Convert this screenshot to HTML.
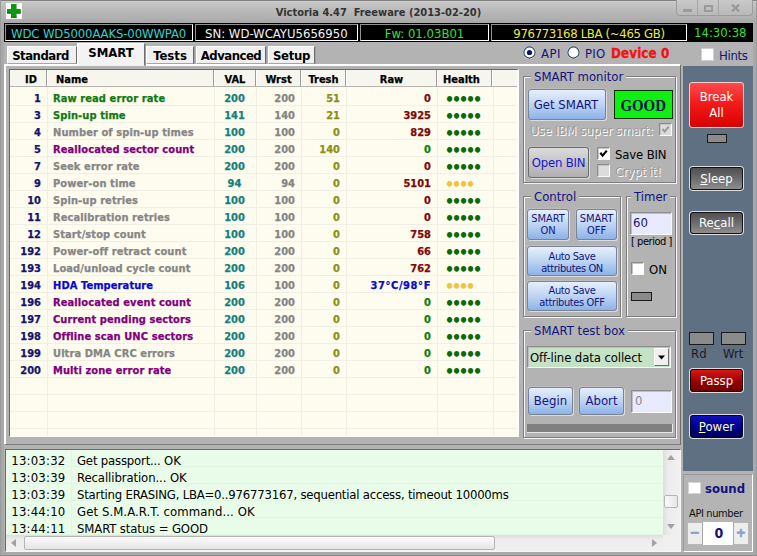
<!DOCTYPE html>
<html><head><meta charset="utf-8"><title>Victoria 4.47</title>
<style>
html,body{margin:0;padding:0}
body{width:757px;height:556px;position:relative;overflow:hidden;background:#b3b3b3;font-family:"DejaVu Sans Condensed","DejaVu Sans","Liberation Sans",sans-serif;font-stretch:condensed;font-size:13px;color:#000;line-height:1}
div,span{box-sizing:border-box}
.a{position:absolute}
.t{position:absolute;white-space:pre;line-height:16px;height:16px}
/* title bar */
#titlebar{left:0;top:0;width:757px;height:23px;background:linear-gradient(#c8c8c8,#a8a8a8)}
#title{left:0;width:757px;text-align:center;top:5px;font-weight:bold;font-size:11px;color:#333}
#wc{left:676px;top:0;width:77px;height:16px;border:1px solid #9b9b9b;border-top:none;border-radius:0 0 4px 4px;background:linear-gradient(#c9c9c9,#b9b9b9)}
/* black strip */
.bb{position:absolute;top:24px;height:17px;background:#000;border:1px solid;border-color:#929292 #fff #fff #929292}
.bb span{position:absolute;top:1px;left:0;right:0;line-height:16px;white-space:pre}
/* tabs */
.tab{position:absolute;top:46px;height:18px;background:#f0f0f0;border:1px solid;border-color:#fff #6d6d6d #a6a6a6 #fff;box-shadow:1px 0 0 #a0a0a0;font-weight:bold;font-size:13px;text-align:center;line-height:17px}
.tab.sel{top:43px;height:23px;background:#f3f3f3;border-bottom-color:#f3f3f3;line-height:18px;z-index:3}
/* table */
#tbl{left:10px;top:70px;width:507px;height:366px;background:#fdfcee;overflow:hidden;font-weight:bold;font-size:11px;-webkit-text-stroke:0.25px}
.tr{position:absolute;left:0;width:508px;height:17px;border-bottom:1px solid #f0efe5}
.c{position:absolute;top:2px;line-height:16px;height:16px;white-space:pre}
.id{left:0;width:31px;text-align:right;color:#14146e}
.nm{left:43px;letter-spacing:0.1px}
.val{left:203px;width:43px;text-align:center;color:#158080}
.wr{left:246px;width:39px;text-align:right;color:#858585}
.th{left:290px;width:40px;text-align:right;color:#8e8e18}
.raw{left:336px;width:85px;text-align:right}
.hl{left:434.7px;top:3px;-webkit-text-stroke:0;font-family:'DejaVu Sans',sans-serif;font-stretch:normal;font-size:15px;letter-spacing:-2.6px}
.n-g{color:#107a10}.n-y{color:#868686}.n-p{color:#800080}.n-b{color:#0808d0}
.r-m{color:#800808}.r-gr{color:#0c800c}.r-b{color:#0808d0;letter-spacing:0.6px}
.hg{color:#0a6a0a}.hy{color:#f2c23c}
.vl{position:absolute;top:17px;bottom:0;width:1px;background:#f0efe5}
#th{position:absolute;left:0;top:0;width:508px;height:17px;background:#f6f6ee;border-bottom:1px solid #b5b5b0;color:#000}
.hc{position:absolute;top:0;height:16px;line-height:20px;overflow:hidden;border-right:1px solid #9c9c9c;box-shadow:1px 0 0 #fff;text-align:center}
/* group boxes */
.gb{position:absolute;border:1px solid #7e7e7e;box-shadow:1px 1px 0 #f2f2f2, inset 1px 1px 0 #f2f2f2}
.gl{position:absolute;top:-8px;background:#b3b3b3;color:#12127e;padding:0 3px;line-height:16px;white-space:pre}
.btn{position:absolute;border:1px solid #76839a;border-radius:3px;background:linear-gradient(#e6effb 0%,#c3d7f4 45%,#8db3e8 100%);box-shadow:1px 1px 0 #dcdcdc,-1px -1px 0 #bcbcbc;color:#14147c;text-align:center;white-space:pre}
.chk{position:absolute;width:13px;height:13px;background:#fff;border:1px solid;border-color:#8a8a8a #fafafa #fafafa #8a8a8a;box-shadow:inset 1px 1px 0 #c4c4c4}
.led{position:absolute;background:#8b8b8b;border:1px solid #1a1a1a}
.dis{color:#9c9c9c;text-shadow:1px 1px 0 #fff}
.inp{position:absolute;background:#e9e9ff;border:1px solid;border-color:#8c8c8c #fafafa #fafafa #8c8c8c;box-shadow:inset 1px 1px 0 #bdbdc8}
/* dark panel */
#dark{left:683px;top:66px;width:70px;height:405px;background:#607083}
.dbtn{position:absolute;left:690px;width:53px;border-radius:3px;color:#fff;text-align:center;white-space:pre}
/* log */
#log{left:6px;top:450px;width:674px;height:101px;background:#e9fce9;overflow:hidden}
.lr{position:absolute;left:0;width:657px;height:17px;border-bottom:1px solid #e1f6e1}
.lr span{position:absolute;top:3px;line-height:16px;white-space:pre}
.lr .tm{left:5.3px;letter-spacing:0.2px}.lr .ms{left:71px}
</style></head>
<body>
<!-- window frame / title -->
<div class="a" id="titlebar"></div>
<div class="a" style="left:0;top:23px;width:4px;height:533px;background:#a8a8a8"></div>
<div class="a" style="left:753px;top:23px;width:4px;height:533px;background:#a8a8a8"></div>
<div class="a" style="left:0;top:552px;width:757px;height:4px;background:#a8a8a8"></div>
<div class="a" style="left:0;top:0;width:757px;height:1px;background:#7f7f7f"></div>
<div class="a" style="left:0;top:1px;width:757px;height:1px;background:#cfcfcf"></div>
<div class="a" style="left:6px;top:3px;width:16px;height:16px;background:#fff">
<svg width="16" height="16" viewBox="0 0 16 16" style="display:block"><path d="M5 1h5.6v5h4.2v4.6h-4.2v4.2H5v-4.2H1V6h4z" fill="#0e960e"/><path d="M5 13.8h5.6v1H5zM1 9.6h4v1H1zM10.6 9.6h4.2v1h-4.2z" fill="#076807"/></svg></div>
<div class="t" id="title">Victoria 4.47  Freeware (2013-02-20)</div>
<div class="a" id="wc">
<div class="a" style="left:20px;top:0;width:1px;height:15px;background:#a5a5a5"></div>
<div class="a" style="left:41px;top:0;width:1px;height:15px;background:#a5a5a5"></div>
<div class="a" style="left:6px;top:9px;width:9px;height:3px;background:#9a9a9a"></div>
<div class="a" style="left:27px;top:5px;width:9px;height:7px;border:2px solid #9a9a9a"></div>
<svg class="a" style="left:54px;top:4px" width="9" height="8" viewBox="0 0 9 8"><path d="M1 0.5L8 7.5M8 0.5L1 7.5" stroke="#979797" stroke-width="2.2"/></svg>
</div>
<!-- black info strip -->
<div class="a" style="left:4px;top:23px;width:749px;height:19px;background:#000"></div>
<div class="bb" style="left:5px;width:188px;color:#2fd2d2"><span style="left:5px;letter-spacing:-0.14px">WDC WD5000AAKS-00WWPA0</span></div>
<div class="bb" style="left:195px;width:163px;color:#f4f4f4"><span style="left:9px">SN: WD-WCAYU5656950</span></div>
<div class="bb" style="left:360px;width:129px;color:#36e036"><span style="text-align:center">Fw: 01.03B01</span></div>
<div class="bb" style="left:491px;width:196px;color:#ecec3c"><span style="text-align:center;letter-spacing:-0.33px">976773168 LBA (~465 GB)</span></div>
<div class="t" style="left:694px;top:25px;color:#36e036">14:30:38</div>
<!-- tabs -->
<div class="tab" style="left:7px;width:70px;letter-spacing:-0.5px;text-indent:-3px">Standard</div>
<div class="tab sel" style="left:77px;width:68px">SMART</div>
<div class="tab" style="left:146px;width:48px">Tests</div>
<div class="tab" style="left:196px;width:70px;letter-spacing:-0.5px">Advanced</div>
<div class="tab" style="left:268px;width:47px;letter-spacing:-0.3px">Setup</div>
<!-- radio row -->
<svg class="a" style="left:522px;top:45px" width="15" height="15" viewBox="0 0 15 15"><circle cx="7.5" cy="7.5" r="6.6" fill="#d8d8d8"/><circle cx="7.5" cy="7.5" r="5.6" fill="#fff" stroke="#2c4464" stroke-width="1.1"/><circle cx="7.5" cy="7.5" r="2.6" fill="#10106a"/></svg>
<div class="t" style="left:541px;top:46px;color:#12127e;letter-spacing:0.5px">API</div>
<svg class="a" style="left:566px;top:45px" width="15" height="15" viewBox="0 0 15 15"><circle cx="7.5" cy="7.5" r="6.6" fill="#d8d8d8"/><circle cx="7.5" cy="7.5" r="5.6" fill="#fff" stroke="#2c4464" stroke-width="1.1"/></svg>
<div class="t" style="left:585px;top:46px;color:#12127e;letter-spacing:0.2px">PIO</div>
<div class="t" style="left:611px;top:46px;color:#f01414;font-weight:bold;font-size:13.3px;-webkit-text-stroke:0.3px;letter-spacing:0.1px">Device 0</div>
<div class="a" style="left:701px;top:48px;width:13px;height:13px;background:#fff;border:1px solid #cfcfcf"></div>
<div class="t" style="left:719px;top:48px;color:#12127e;letter-spacing:-0.3px">Hints</div>
<!-- tab page -->
<div class="a" style="left:4px;top:64px;width:677px;height:381px;border:1px solid;border-color:#fff #6d6d6d #7a7a7a #fff;box-shadow:inset 1px 1px 0 #fff;z-index:2"></div>
<div class="a" style="left:9px;top:69px;width:510px;height:368px;border:1px solid;border-color:#686868 #fff #fff #686868;border-right-width:2px"></div>
<div class="a" id="tbl">
<div id="th">
<div class="hc" style="left:0;width:37px;text-align:right;padding-right:9px">ID</div>
<div class="hc" style="left:38px;width:166px;text-align:left;padding-left:8px">Name</div>
<div class="hc" style="left:205px;width:41px">VAL</div>
<div class="hc" style="left:247px;width:44px">Wrst</div>
<div class="hc" style="left:292px;width:44px">Tresh</div>
<div class="hc" style="left:337px;width:90px">Raw</div>
<div class="hc" style="left:428px;width:54px;text-align:left;padding-left:5px">Health</div>
</div>
<div class="vl" style="left:37px"></div><div class="vl" style="left:204px"></div><div class="vl" style="left:246px"></div><div class="vl" style="left:291px"></div><div class="vl" style="left:336px"></div><div class="vl" style="left:427px"></div><div class="vl" style="left:483px"></div>
<div class="tr" style="top:19px"><span class="c id">1</span><span class="c nm n-g">Raw read error rate</span><span class="c val">200</span><span class="c wr">200</span><span class="c th">51</span><span class="c raw r-m">0</span><span class="c hl hg">•••••</span></div>
<div class="tr" style="top:36px"><span class="c id">3</span><span class="c nm n-g">Spin-up time</span><span class="c val">141</span><span class="c wr">140</span><span class="c th">21</span><span class="c raw r-m">3925</span><span class="c hl hg">•••••</span></div>
<div class="tr" style="top:53px"><span class="c id">4</span><span class="c nm n-y">Number of spin-up times</span><span class="c val">100</span><span class="c wr">100</span><span class="c th">0</span><span class="c raw r-m">829</span><span class="c hl hg">•••••</span></div>
<div class="tr" style="top:70px"><span class="c id">5</span><span class="c nm n-p">Reallocated sector count</span><span class="c val">200</span><span class="c wr">200</span><span class="c th">140</span><span class="c raw r-gr">0</span><span class="c hl hg">•••••</span></div>
<div class="tr" style="top:87px"><span class="c id">7</span><span class="c nm n-y">Seek error rate</span><span class="c val">200</span><span class="c wr">200</span><span class="c th">0</span><span class="c raw r-m">0</span><span class="c hl hg">•••••</span></div>
<div class="tr" style="top:104px"><span class="c id">9</span><span class="c nm n-y">Power-on time</span><span class="c val">94</span><span class="c wr">94</span><span class="c th">0</span><span class="c raw r-m">5101</span><span class="c hl hy">••••</span></div>
<div class="tr" style="top:121px"><span class="c id">10</span><span class="c nm n-y">Spin-up retries</span><span class="c val">100</span><span class="c wr">100</span><span class="c th">0</span><span class="c raw r-m">0</span><span class="c hl hg">•••••</span></div>
<div class="tr" style="top:138px"><span class="c id">11</span><span class="c nm n-y">Recalibration retries</span><span class="c val">100</span><span class="c wr">100</span><span class="c th">0</span><span class="c raw r-m">0</span><span class="c hl hg">•••••</span></div>
<div class="tr" style="top:155px"><span class="c id">12</span><span class="c nm n-y">Start/stop count</span><span class="c val">100</span><span class="c wr">100</span><span class="c th">0</span><span class="c raw r-m">758</span><span class="c hl hg">•••••</span></div>
<div class="tr" style="top:172px"><span class="c id">192</span><span class="c nm n-y">Power-off retract count</span><span class="c val">200</span><span class="c wr">200</span><span class="c th">0</span><span class="c raw r-m">66</span><span class="c hl hg">•••••</span></div>
<div class="tr" style="top:189px"><span class="c id">193</span><span class="c nm n-y">Load/unload cycle count</span><span class="c val">200</span><span class="c wr">200</span><span class="c th">0</span><span class="c raw r-m">762</span><span class="c hl hg">•••••</span></div>
<div class="tr" style="top:206px"><span class="c id">194</span><span class="c nm n-b">HDA Temperature</span><span class="c val">106</span><span class="c wr">100</span><span class="c th">0</span><span class="c raw r-b">37°C/98°F</span><span class="c hl hy">••••</span></div>
<div class="tr" style="top:223px"><span class="c id">196</span><span class="c nm n-p">Reallocated event count</span><span class="c val">200</span><span class="c wr">200</span><span class="c th">0</span><span class="c raw r-gr">0</span><span class="c hl hg">•••••</span></div>
<div class="tr" style="top:240px"><span class="c id">197</span><span class="c nm n-p">Current pending sectors</span><span class="c val">200</span><span class="c wr">200</span><span class="c th">0</span><span class="c raw r-gr">0</span><span class="c hl hg">•••••</span></div>
<div class="tr" style="top:257px"><span class="c id">198</span><span class="c nm n-p">Offline scan UNC sectors</span><span class="c val">200</span><span class="c wr">200</span><span class="c th">0</span><span class="c raw r-gr">0</span><span class="c hl hg">•••••</span></div>
<div class="tr" style="top:274px"><span class="c id">199</span><span class="c nm n-y">Ultra DMA CRC errors</span><span class="c val">200</span><span class="c wr">200</span><span class="c th">0</span><span class="c raw r-gr">0</span><span class="c hl hg">•••••</span></div>
<div class="tr" style="top:291px"><span class="c id">200</span><span class="c nm n-p">Multi zone error rate</span><span class="c val">200</span><span class="c wr">200</span><span class="c th">0</span><span class="c raw r-gr">0</span><span class="c hl hg">•••••</span></div><div class="tr" style="top:308px"></div><div class="tr" style="top:325px"></div><div class="tr" style="top:342px"></div>
</div>
<!-- SMART monitor group -->
<div class="gb" style="left:523px;top:76px;width:153px;height:107px"><span class="gl" style="left:7px">SMART monitor</span></div>
<div class="btn" style="left:528px;top:89px;width:78px;height:31px;line-height:30px;text-indent:-2px">Get SMART</div>
<div class="a" style="left:614px;top:90px;width:59px;height:29px;background:#10f010;border:1px solid #0a300a;text-align:center;font-family:'Liberation Serif',serif;font-stretch:normal;font-weight:bold;font-size:16.5px;line-height:29px;color:#0c1258"><span style="display:inline-block;transform:scaleX(0.9)">GOOD</span></div>
<div class="t dis" style="left:530px;top:123px;letter-spacing:-0.12px">Use IBM super smart:</div>
<div class="chk" style="left:659px;top:123px;background:#dcdcdc"><svg width="11" height="11" viewBox="0 0 11 11" style="display:block"><path d="M2.5 5L4.7 7.6L8.7 2.6" fill="none" stroke="#9a9a9a" stroke-width="2"/></svg></div>
<div class="btn" style="left:528px;top:147px;width:61px;height:31px;line-height:30px;background:linear-gradient(#dcdcdc,#c4c4c4 50%,#b0b0b0);border-color:#6a6a6a;color:#1414d2;letter-spacing:-0.2px">Open BIN</div>
<div class="chk" style="left:597px;top:147px"><svg width="11" height="11" viewBox="0 0 11 11" style="display:block"><path d="M2.3 4.8L4.6 7.6L8.8 2.6" fill="none" stroke="#000" stroke-width="2.2"/></svg></div>
<div class="t" style="left:615px;top:147px;letter-spacing:-0.15px">Save BIN</div>
<div class="chk" style="left:597px;top:164px;background:#dcdcdc"></div>
<div class="t dis" style="left:615px;top:164px;letter-spacing:-0.25px">Crypt it!</div>
<!-- Control group -->
<div class="gb" style="left:523px;top:196px;width:98px;height:121px"><span class="gl" style="left:7px">Control</span></div>
<div class="btn" style="left:527px;top:209px;width:42px;height:31px;font-size:11px;line-height:12px;padding-top:3px">SMART
ON</div>
<div class="btn" style="left:576px;top:209px;width:41px;height:31px;font-size:11px;line-height:12px;padding-top:3px">SMART
OFF</div>
<div class="btn" style="left:527px;top:246px;width:90px;height:30px;font-size:11px;line-height:12px;padding-top:4px;letter-spacing:-0.38px">Auto Save
attributes ON</div>
<div class="btn" style="left:527px;top:281px;width:90px;height:30px;font-size:11px;line-height:12px;padding-top:3px;letter-spacing:-0.38px">Auto Save
attributes OFF</div>
<!-- Timer group -->
<div class="gb" style="left:626px;top:196px;width:50px;height:121px"><span class="gl" style="left:4px">Timer</span></div>
<div class="inp" style="left:630px;top:212px;width:42px;height:23px"><span class="t" style="left:2px;top:2px;color:#14147c">60</span></div>
<div class="t" style="left:631px;top:234px;font-size:11px;letter-spacing:-0.45px">[ period ]</div>
<div class="chk" style="left:631px;top:262px"></div>
<div class="t" style="left:649px;top:262px">ON</div>
<div class="led" style="left:631px;top:292px;width:21px;height:9px"></div>
<!-- SMART test box -->
<div class="gb" style="left:523px;top:330px;width:153px;height:108px"><span class="gl" style="left:7px">SMART test box</span></div>
<div class="inp" style="left:527px;top:346px;width:144px;height:22px;background:#c4e2c4"><span class="t" style="left:2px;top:3px;letter-spacing:-0.1px">Off-line data collect</span>
<div class="a" style="right:1px;top:1px;width:15px;height:18px;background:#f0f0f0;border:1px solid;border-color:#fff #707070 #707070 #fff"><svg width="13" height="16" viewBox="0 0 13 16" style="display:block"><path d="M3 6.5h7l-3.5 4z" fill="#000"/></svg></div></div>
<div class="btn" style="left:528px;top:387px;width:45px;height:28px;line-height:25px">Begin</div>
<div class="btn" style="left:579px;top:387px;width:45px;height:28px;line-height:25px">Abort</div>
<div class="inp" style="left:631px;top:390px;width:41px;height:23px"><span class="t" style="left:3px;top:2px;color:#8a8a8a">0</span></div>
<div class="a" style="left:527px;top:424px;width:146px;height:9px;background:#808080;border-bottom:1px solid #e8e8e8;border-right:1px solid #e8e8e8"></div>
<!-- dark panel -->
<div class="a" id="dark"></div>
<div class="dbtn" style="left:689px;width:55px;top:82px;height:46px;background:linear-gradient(#ff4a4a,#f01818 50%,#d80000);border:1px solid #f6d0d0;line-height:16px;padding-top:6px">Break
All</div>
<div class="led" style="left:707px;top:134px;width:20px;height:9px"></div>
<div class="dbtn" style="top:167px;height:23px;background:linear-gradient(#505050,#6c6c6c 50%,#8e8e8e);border:1px solid #111;box-shadow:0 0 0 1px #dedede;line-height:22px"><u>S</u>leep</div>
<div class="dbtn" style="top:212px;height:22px;background:linear-gradient(#505050,#6c6c6c 50%,#8e8e8e);border:1px solid #111;box-shadow:0 0 0 1px #dedede;line-height:20px">Re<u>c</u>all</div>
<div class="led" style="left:689px;top:332px;width:25px;height:13px"></div>
<div class="led" style="left:721px;top:332px;width:25px;height:13px"></div>
<div class="t" style="left:691px;top:346px;color:#1c1c1c">Rd</div>
<div class="t" style="left:723px;top:346px;color:#1c1c1c">Wrt</div>
<div class="dbtn" style="top:369px;height:23px;background:linear-gradient(#d81818,#a00000 50%,#6a0000);border:1px solid #200;box-shadow:0 0 0 1px #dedede;line-height:21px">Passp</div>
<div class="dbtn" style="top:415px;height:23px;background:linear-gradient(#1010b8,#000090 50%,#000058);border:1px solid #002;box-shadow:0 0 0 1px #dedede;line-height:21px;color:#ffffd0"><u>P</u>ower</div>
<!-- lower right gray panel -->
<div class="a" style="left:683px;top:474px;width:70px;height:78px;background:#b4b4b4;border:1px solid;border-color:#9a9a9a #fff #fff #9a9a9a"></div>
<div class="a" style="left:688px;top:482px;width:13px;height:12px;background:#fff;border:1px solid #d4d4d4"></div>
<div class="t" style="left:705px;top:481px;color:#12127e;font-weight:bold;font-size:13px">sound</div>
<div class="t" style="left:689px;top:506px;font-size:11px;color:#111;letter-spacing:-0.38px">API number</div>
<div class="a" style="left:687px;top:522px;width:62px;height:23px;background:#ededed;border:1px solid #b8b8b8"></div>
<div class="a" style="left:702px;top:522px;width:32px;height:23px;background:#fff;border:1px solid #a8a8a8;border-width:0 1px"></div>
<div class="t" style="left:703px;top:525px;width:32px;text-align:center;color:#12127e;font-weight:bold;font-size:14px">0</div>
<div class="t" style="left:688px;top:525px;width:14px;text-align:center;color:#8aa2c4;font-weight:bold;font-size:13px;-webkit-text-stroke:0.7px">−</div>
<div class="t" style="left:734px;top:525px;width:14px;text-align:center;color:#8aa2c4;font-weight:bold;font-size:13px;-webkit-text-stroke:0.7px">+</div>
<!-- separator between page and log -->
<!-- log -->
<div class="a" style="left:5px;top:449px;width:676px;height:103px;border:1px solid;border-color:#6a6a6a #f6f6f6 #f6f6f6 #6a6a6a"></div>
<div class="a" id="log">
<div class="lr" style="top:0"><span class="tm">13:03:32</span><span class="ms" style="letter-spacing:-0.19px">Get passport... OK</span></div>
<div class="lr" style="top:17px"><span class="tm">13:03:39</span><span class="ms" style="letter-spacing:-0.1px">Recallibration... OK</span></div>
<div class="lr" style="top:34px"><span class="tm">13:03:39</span><span class="ms" style="letter-spacing:-0.213px">Starting ERASING, LBA=0..976773167, sequential access, timeout 10000ms</span></div>
<div class="lr" style="top:51px"><span class="tm">13:44:10</span><span class="ms" style="letter-spacing:0.08px">Get S.M.A.R.T. command... OK</span></div>
<div class="lr" style="top:68px"><span class="tm">13:44:11</span><span class="ms" style="letter-spacing:-0.12px">SMART status = GOOD</span></div>
<div class="a" style="left:65px;top:0;width:1px;height:85px;background:#e1f6e1"></div>
<!-- scrollbars -->
<div class="a" style="left:657px;top:0;width:17px;height:85px;background:linear-gradient(90deg,#dedede,#ececec 30%,#f1f1f1)"></div>
<svg class="a" style="left:661px;top:5px" width="8" height="5" viewBox="0 0 8 5"><path d="M0 5L4 0L8 5z" fill="#a2a2a2"/></svg>
<svg class="a" style="left:661px;top:74px" width="8" height="5" viewBox="0 0 8 5"><path d="M0 0L4 5L8 0z" fill="#a2a2a2"/></svg>
<div class="a" style="left:658px;top:45px;width:14px;height:13px;background:linear-gradient(90deg,#fafafa,#e6e6e6);border:1px solid #b4b4b4;border-radius:2px"></div>
<div class="a" style="left:0;top:85px;width:657px;height:16px;background:linear-gradient(#dedede,#ececec 30%,#f1f1f1)"></div>
<div class="a" style="left:657px;top:85px;width:17px;height:16px;background:#f0f0f0"></div>
<svg class="a" style="left:5px;top:89px" width="5" height="8" viewBox="0 0 5 8"><path d="M5 0L0 4L5 8z" fill="#a2a2a2"/></svg>
<svg class="a" style="left:646px;top:89px" width="5" height="8" viewBox="0 0 5 8"><path d="M0 0L5 4L0 8z" fill="#a2a2a2"/></svg>
<div class="a" style="left:18px;top:86px;width:471px;height:14px;background:linear-gradient(#fafafa,#e6e6e6);border:1px solid #b4b4b4;border-radius:2px"></div>
</div>
<!-- window frame edges -->
<div class="a" style="left:0;top:0;width:1px;height:556px;background:#9a9a9a"></div>
<div class="a" style="left:756px;top:0;width:1px;height:556px;background:#9a9a9a"></div>
<div class="a" style="left:0;top:555px;width:757px;height:1px;background:#8c8c8c"></div>
</body></html>
